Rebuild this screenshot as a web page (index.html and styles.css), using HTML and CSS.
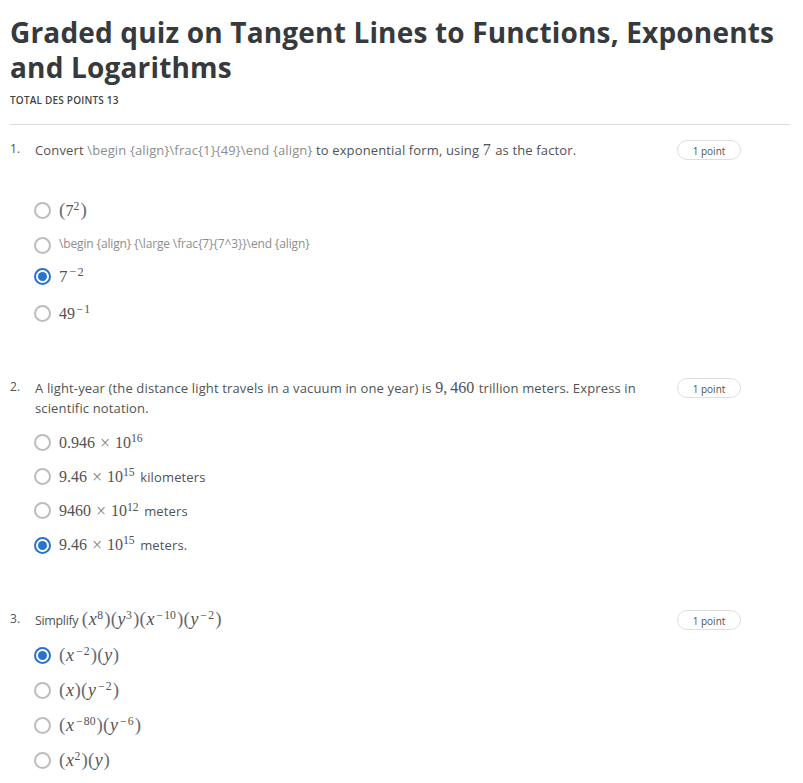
FILE: index.html
```html
<!DOCTYPE html>
<html lang="fr">
<head>
<meta charset="utf-8">
<title>Graded quiz</title>
<link rel="stylesheet" href="styles.css">
</head>
<body>
<header class="head">
  <h1 class="title">Graded quiz on Tangent Lines to Functions, Exponents<br>and Logarithms</h1>
  <p class="total">TOTAL DES POINTS 13</p>
</header>
<main>
  <section class="question q1">
    <span class="num">1.</span>
    <div class="body">
      <p class="prompt">Convert <span class="raw">\begin {align}\frac{1}{49}\end {align}</span> to exponential form, using <span class="math">7</span> as the factor.</p>
      <ul class="choices">
        <li class="choice c1"><i class="radio"></i><span class="label"><span class="math"><b>(</b>7<sup>2</sup><b>)</b></span></span></li>
        <li class="choice c2"><i class="radio"></i><span class="label raw">\begin {align} {\large \frac{7}{7^3}}\end {align}</span></li>
        <li class="choice c3"><i class="radio on"></i><span class="label"><span class="math big">7<sup><u>−</u>2</sup></span></span></li>
        <li class="choice c4"><i class="radio"></i><span class="label"><span class="math">49<sup><u>−</u>1</sup></span></span></li>
      </ul>
    </div>
    <span class="pill">1 point</span>
  </section>
  <section class="question q2">
    <span class="num">2.</span>
    <div class="body">
      <p class="prompt">A light-year (the distance light travels in a vacuum in one year) is <span class="math">9,<s></s>460</span> trillion meters. Express in<br>scientific notation.</p>
      <ul class="choices">
        <li class="choice"><i class="radio"></i><span class="label"><span class="math">0.946<em class="times">×</em>10<sup>16</sup></span></span></li>
        <li class="choice"><i class="radio"></i><span class="label"><span class="math">9.46<em class="times">×</em>10<sup>15</sup></span> kilometers</span></li>
        <li class="choice"><i class="radio"></i><span class="label"><span class="math">9460<em class="times">×</em>10<sup>12</sup></span> meters</span></li>
        <li class="choice last"><i class="radio on"></i><span class="label"><span class="math">9.46<em class="times">×</em>10<sup>15</sup></span> meters.</span></li>
      </ul>
    </div>
    <span class="pill low">1 point</span>
  </section>
  <section class="question q3">
    <span class="num">3.</span>
    <div class="body">
      <p class="prompt"><span class="simplify">Simplify</span> <span class="math"><b>(</b><var>x</var><sup>8</sup><b>)</b><b>(</b><var>y</var><sup>3</sup><b>)</b><b>(</b><var>x</var><sup><u>−</u>10</sup><b>)</b><b>(</b><var>y</var><sup><u>−</u>2</sup><b>)</b></span></p>
      <ul class="choices">
        <li class="choice"><i class="radio on"></i><span class="label"><span class="math"><b>(</b><var>x</var><sup><u>−</u>2</sup><b>)</b><b>(</b><var>y</var><b>)</b></span></span></li>
        <li class="choice"><i class="radio"></i><span class="label"><span class="math"><b>(</b><var>x</var><b>)</b><b>(</b><var>y</var><sup><u>−</u>2</sup><b>)</b></span></span></li>
        <li class="choice"><i class="radio"></i><span class="label"><span class="math"><b>(</b><var>x</var><sup><u>−</u>80</sup><b>)</b><b>(</b><var>y</var><sup><u>−</u>6</sup><b>)</b></span></span></li>
        <li class="choice"><i class="radio"></i><span class="label"><span class="math"><b>(</b><var>x</var><sup>2</sup><b>)</b><b>(</b><var>y</var><b>)</b></span></span></li>
      </ul>
    </div>
    <span class="pill">1 point</span>
  </section>
</main>
</body>
</html>
```
FILE: styles.css
```css
* { box-sizing: border-box; }
body {
  margin: 0;
  padding: 0 13px 0 10px;
  height: 783px;
  overflow: hidden;
  background: #fff;
  color: #505357;
  font: 13px/20px "Open Sans", sans-serif;
  letter-spacing: 0.14px;
}
.head { height: 125px; padding-top: 15px; border-bottom: 1px solid #dcdcdc; }
.title {
  margin: 0;
  color: #373a3c;
  font-size: 28px;
  line-height: 35px;
  font-weight: 700;
  letter-spacing: 0.17px;
  white-space: nowrap;
}
.total {
  margin: 7px 0 0;
  color: #414447;
  font-size: 10px;
  line-height: 16px;
  font-weight: 600;
  letter-spacing: 0.2px;
}
.question { display: grid; grid-template-columns: 24px 643px 64px; align-items: start; }
.q1 { height: 239px; padding-top: 15px; }
.q2 { height: 230px; padding-top: 14px; }
.q3 { height: 189px; padding-top: 16px; }
.num { font-size: 12px; line-height: 18px; }
.prompt { margin: 0; padding-left: 1px; white-space: nowrap; height: 20px; }
.q2 .prompt { height: 40px; }
.raw { color: #8d8d8d; }
.pill {
  height: 20px;
  border: 1px solid #dedede;
  border-radius: 10px;
  font-size: 10px;
  line-height: 20px;
  letter-spacing: 0;
  text-align: center;
}
.pill.low { line-height: 21px; }
.choices { list-style: none; margin: 0; padding: 0; }
.choice { display: flex; align-items: center; height: 34.3px; }
.q1 .choices { padding-top: 33px; }
.q1 .c1 { height: 35px; }
.q1 .c2 { height: 34px; }
.q1 .c3 { height: 29px; }
.q1 .c4 { height: 44px; }
.q2 .choices { padding-top: 7px; }
.q3 .choices { padding-top: 8px; }
.q3 .choice { height: 35px; }
.radio {
  flex: none;
  display: grid;
  place-items: center;
  width: 17px;
  height: 17px;
  margin-right: 8px;
  border: 2px solid #bdbdbd;
  border-radius: 50%;
}
.radio.on { border-color: #2a73cc; }
.radio.on::after { content: ""; width: 9px; height: 9px; border-radius: 50%; background: #2a73cc; }
.label { white-space: nowrap; padding-top: 1px; }
.q1 .label { padding-top: 0; }
.q1 .c4 .label { padding-top: 2px; }
.q2 .last .label { padding-top: 0; margin-top: -1px; }
.q1 .label.raw { font-size: 12px; letter-spacing: -0.14px; margin: -3px 0 0 0; }
.math { font-family: "Liberation Serif", serif; font-size: 16px; line-height: 0; letter-spacing: 0; margin-right: 1px; }
.math.big { font-size: 17px; }
.math b { display: inline-block; width: 6.5px; font-size: 19px; font-weight: 400; text-align: center; color: #686b6e; }
.math var { display: inline-block; width: 9px; font-size: 18px; font-style: italic; text-align: center; }
.math sup { font-size: 0.73em; line-height: 0; vertical-align: 0.48em; margin-right: 1px; }
.math u { display: inline-block; width: 0.8em; text-decoration: none; text-align: center; }
.math s { display: inline-block; width: 3px; }
.times { display: inline-block; width: 20px; font-size: 18px; font-style: normal; text-align: center; color: #808386; vertical-align: -1px; }
.simplify { font-size: 12.5px; letter-spacing: -0.35px; }
```
